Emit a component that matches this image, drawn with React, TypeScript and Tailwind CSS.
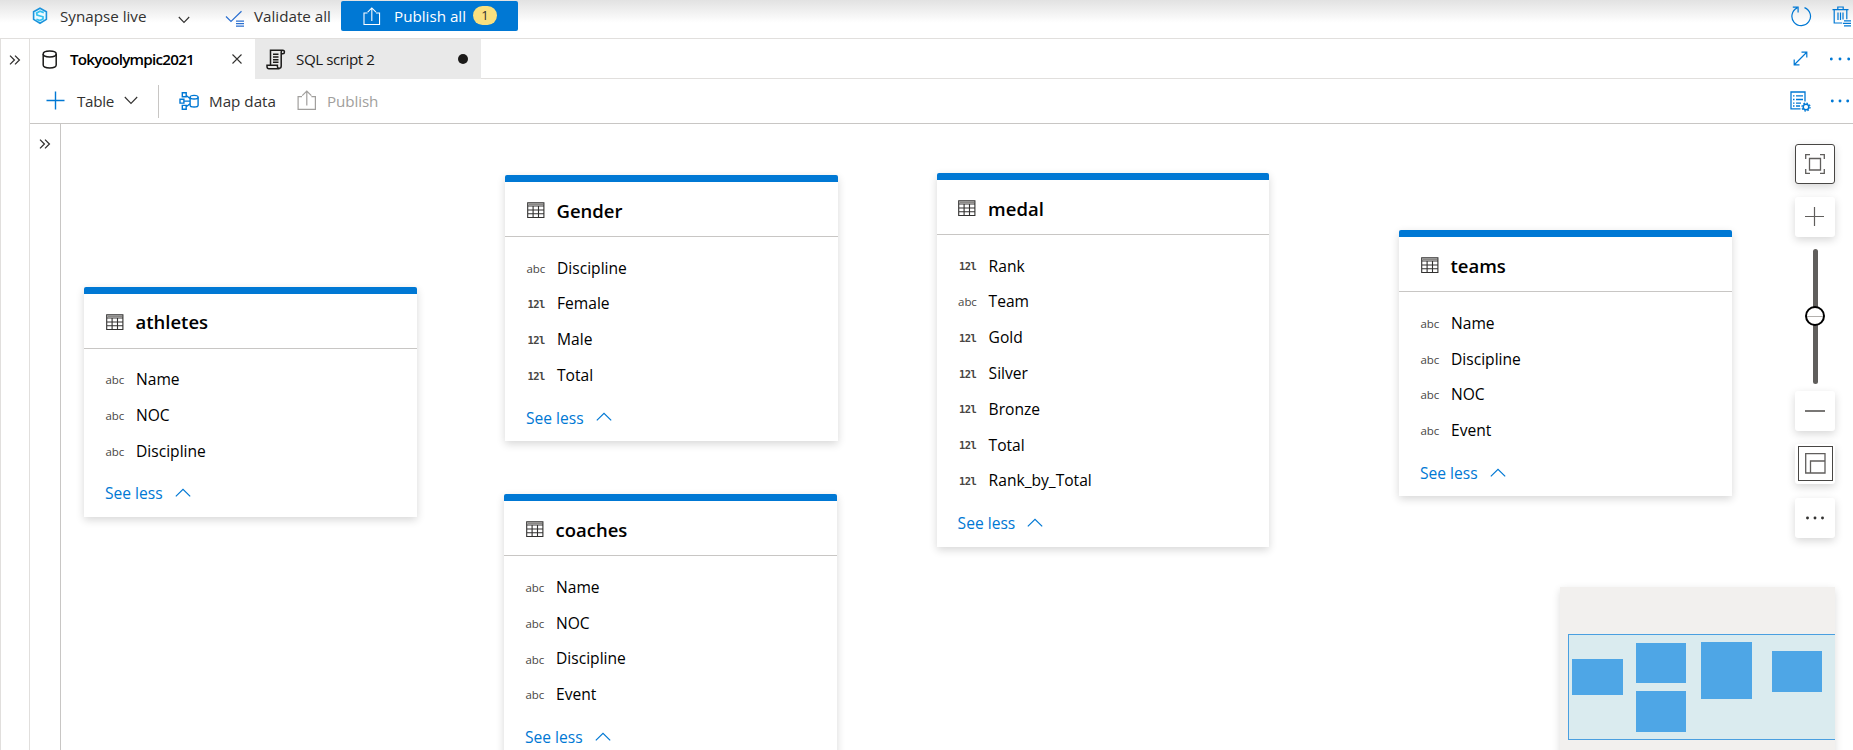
import type { ReactNode } from "react";

type FieldType = "abc" | "12l";
type Field = [FieldType, string];
type TableNode = { name: string; x: number; y: number; fields: Field[] };

const TABLES: TableNode[] = [
  { name: "athletes", x: 23, y: 162.5, fields: [["abc", "Name"], ["abc", "NOC"], ["abc", "Discipline"]] },
  { name: "Gender", x: 444, y: 51, fields: [["abc", "Discipline"], ["12l", "Female"], ["12l", "Male"], ["12l", "Total"]] },
  { name: "coaches", x: 443, y: 370.3, fields: [["abc", "Name"], ["abc", "NOC"], ["abc", "Discipline"], ["abc", "Event"]] },
  {
    name: "medal",
    x: 875.6,
    y: 49,
    fields: [["12l", "Rank"], ["abc", "Team"], ["12l", "Gold"], ["12l", "Silver"], ["12l", "Bronze"], ["12l", "Total"], ["12l", "Rank_by_Total"]],
  },
  { name: "teams", x: 1338, y: 106.2, fields: [["abc", "Name"], ["abc", "Discipline"], ["abc", "NOC"], ["abc", "Event"]] },
];

const MINI = [
  { x: 3.5, y: 25, w: 50.5, h: 35.5 },
  { x: 67.3, y: 8.5, w: 50.5, h: 40.5 },
  { x: 67.3, y: 57, w: 50.5, h: 40.5 },
  { x: 132.5, y: 8, w: 50.5, h: 57 },
  { x: 203.3, y: 17, w: 50.5, h: 40.5 },
];

function Svg({ w, h, className = "", sw = 1.2, children }: { w: number; h: number; className?: string; sw?: number; children: ReactNode }) {
  return (
    <svg width={w} height={h} viewBox={`0 0 ${w} ${h}`} fill="none" stroke="currentColor" strokeWidth={sw} className={`shrink-0 ${className}`}>
      {children}
    </svg>
  );
}

function DoubleChevron({ className = "" }: { className?: string }) {
  return (
    <Svg w={12} h={10} sw={1.3} className={className}>
      <path d="M1 .6 5.4 5 1 9.4M6 .6 10.4 5 6 9.4" />
    </Svg>
  );
}

function ShareUp({ className = "" }: { className?: string }) {
  return (
    <Svg w={20} h={21} className={className}>
      <path d="M5 6.6H1.1v12.8h17.3V6.6h-4M9.8 15.5V1.2M5.2 5.6l4.6-4.6 4.6 4.6" />
    </Svg>
  );
}

function Dots({ gap, className = "" }: { gap: number; className?: string }) {
  return (
    <Svg w={20} h={4} className={className}>
      <g fill="currentColor" stroke="none">
        <circle cx={10 - gap} cy="2" r="1.45" />
        <circle cx="10" cy="2" r="1.45" />
        <circle cx={10 + gap} cy="2" r="1.45" />
      </g>
    </Svg>
  );
}

function TableIcon() {
  return (
    <Svg w={18} h={17} className="text-[#323130]">
      <path d="M1.5 2.2h15" stroke="#8a8886" strokeWidth="1.6" />
      <path d="M.7.7h16.2v14.8H.7zM.7 4h16.2M.7 8h16.2M.7 11.8h16.2M6.1 4v11.5M11.5 4v11.5" strokeWidth="1.1" />
    </Svg>
  );
}

function TypeTag({ type }: { type: FieldType }) {
  return type === "abc" ? (
    <span className="w-[31px] text-[11.5px] font-medium tracking-[-0.1px] text-[#484644]">abc</span>
  ) : (
    <span className="w-[31px] pl-px font-['DejaVu_Sans_Mono',monospace] text-[10.5px] font-bold tracking-[-0.6px] text-[#484644]">12l</span>
  );
}

function TableCard({ table }: { table: TableNode }) {
  return (
    <section
      className="absolute w-[332.5px] rounded-t-[2px] border-t-[7.5px] border-[#0078d4] bg-white shadow-[0_3px_9px_rgba(0,0,0,0.16)]"
      style={{ left: table.x, top: table.y }}
    >
      <header className="flex h-[55px] items-center border-b border-[#c8c6c4] pt-[3px] pl-[21.5px]">
        <TableIcon />
        <h2 className="pt-px pl-[12px] text-[18.5px] leading-none font-semibold text-black">{table.name}</h2>
      </header>
      <ul className="pt-[13.5px]">
        {table.fields.map(([type, name]) => (
          <li key={name} className="flex h-[35.8px] items-center pl-[21.5px] text-[15.6px] leading-none text-black">
            <TypeTag type={type} />
            <span className="-ml-[0.5px]">{name}</span>
          </li>
        ))}
      </ul>
      <button className="flex h-[47.5px] items-center pt-[2px] pl-[21px] text-[15.6px] leading-none text-[#0078d4]">
        See less
        <Svg w={16} h={10} className="mb-[2px] ml-[12px]">
          <path d="M.8 8.4 8 1.3l7.2 7.1" />
        </Svg>
      </button>
    </section>
  );
}

function TopBar() {
  return (
    <div className="flex h-[39px] shrink-0 items-start border-b border-[#e1dfdd] bg-linear-to-b from-[#e2e2e2] to-white to-60% text-[#323130]">
      <div className="flex h-[32px] w-full items-center">
        <Svg w={16} h={18} className="ml-[32px]">
          <path d="m8 1.2 6.4 3.6v7.6L8 16.2l-6.4-3.8V4.8z" stroke="#1b93dc" strokeWidth="1.6" fill="#eafaff" />
          <path d="M11.8 5.6 8 4.2 4.6 6 5 8l6 1.800v2.200l-3.200 1.600-3.400-1.400" stroke="#35c1f1" strokeWidth="1.700" />
        </Svg>
        <span className="ml-[12px] w-[118px] pt-[2px]">Synapse live</span>
        <Svg w={12} h={8} className="mt-[8px]" sw={1.1}>
          <path d="M.8 1 6 6.5 11.2 1" />
        </Svg>
        <Svg w={20} h={18} className="mt-[5px] ml-[35px] text-[#2b6fd0]">
          <path d="m1 6.500 5 5L16.500 1.200M11 11.200h8M11 13.700h8M11 16.200h8" />
        </Svg>
        <span className="ml-[9px] w-[87px] pt-[2px]">Validate all</span>
        <button className="mt-px flex h-[30px] w-[177px] items-center self-start rounded-[2px] bg-[#0078d4] pl-[22px] text-white">
          <ShareUp className="h-[19px] w-[18px]" />
          <span className="ml-[13px] w-[79px] pt-[2px] text-left">Publish all</span>
          <span className="mb-px flex h-[19px] w-[24px] items-center justify-center rounded-full bg-[#f9e07f] text-[13px] text-[#323130]">1</span>
        </button>
        <div className="ml-auto flex items-center pr-[2px] text-[#0078d4]">
          <Svg w={21} h={21}>
            <path d="M13.5 1.600a9.300 9.300 0 1 1-7.300.3M1.800 1.200h5.300v5.200" />
          </Svg>
          <Svg w={19} h={21} className="ml-[20px]">
            <path d="M.5 3.700h16M5.800 3.500V1h5.400v2.500M2.200 3.700V17h8M14.800 3.700v9.500M6 6.500v7.500M8.500 6.500v7.500M11 6.500v7M12 14.800h7M11 17.300h8M12 19.800h7" />
          </Svg>
        </div>
      </div>
    </div>
  );
}

function Tabs() {
  return (
    <div className="flex h-[40px] shrink-0 items-stretch border-b border-[#e1dfdd]">
      <div className="-mb-px flex w-[225px] items-center bg-white pl-[12px]">
        <Svg w={16} h={19} sw={1.5} className="text-[#1b1a19]">
          <path d="M1.200 4v11c0 1.700 2.800 2.900 6.500 2.900s6.500-1.200 6.500-2.900V4" />
          <ellipse cx="7.700" cy="4" rx="6.500" ry="2.900" />
        </Svg>
        <span className="ml-[12px] w-[162px] pt-[2px] text-[15.200px] font-semibold tracking-[-0.75px] text-black">Tokyoolympic2021</span>
        <Svg w={10} h={10} sw={1.1} className="text-[#323130]">
          <path d="m.5.5 9 9M9.500.5l-9 9" />
        </Svg>
      </div>
      <div className="-mb-px flex w-[226px] items-center bg-[#e9e9e9] pl-[11px]">
        <Svg w={20} h={21} sw={1.5} className="text-[#1b1a19]">
          <path d="M4.500 15.500V1.200h12.300c2.200 0 2.200 3.600 0 3.600h-1.600M15.200 5V17c0 3-3.800 3-3.800.5v-1.300H1v1.300c0 1.300.8 2.300 2 2.300h10.500M15.200 5V3c0-1 .6-1.800 1.600-1.800" />
          <path d="M7 5.200h5.500M7 8h5.500M7 10.700h5.500M7 13.300h5.500" />
        </Svg>
        <span className="ml-[10px] w-[162px] pt-[2px] tracking-[-0.45px] text-[#1b1a19]">SQL script 2</span>
        <i className="h-[10px] w-[10px] rounded-full bg-[#1b1a19]" />
      </div>
      <div className="ml-auto flex items-center pr-[3px] text-[#0078d4]">
        <Svg w={15} h={15} className="mr-px">
          <path d="M1.500 13.500l12-12M8.500 1.200h5.300v5.300M1.200 8.500v5.300h5.300" />
        </Svg>
        <Dots gap={8.7} className="ml-[21px]" />
      </div>
    </div>
  );
}

function Toolbar() {
  return (
    <div className="flex h-[45px] shrink-0 items-center border-b border-[#c8c6c4] text-[#323130]">
      <Svg w={19} h={19} sw={1.4} className="mb-px ml-[16px] text-[#0078d4]">
        <path d="M9.500.5v18M.5 9.500h18" />
      </Svg>
      <span className="ml-[12px] w-[47px] pt-[2px] tracking-[-0.3px]">Table</span>
      <Svg w={14} h={9} sw={1.1} className="mb-px">
        <path d="M.8 1 7 7.500 13.200 1" />
      </Svg>
      <i className="ml-[20px] h-[33px] w-px bg-[#c8c6c4]" />
      <Svg w={20} h={18} sw={1.4} className="ml-[20px] text-[#0078d4]">
        <path d="M3.300.8h3.900v3.900H3.300zM1 7.200h3.900v3.900H1zM3.300 13.400h3.900v3.900H3.300zM7.200 3.500l3.800 3M4.900 9.100H11M7.200 14.800l3.800-3" />
        <ellipse cx="15.100" cy="5.200" rx="4" ry="1.800" />
        <path d="M11.100 5.200v8c0 2.400 8 2.400 8 0v-8" />
      </Svg>
      <span className="ml-[10px] w-[88px] pt-[2px]">Map data</span>
      <ShareUp className="mb-px text-[#a19f9d]" />
      <span className="ml-[10px] pt-[2px] tracking-[-0.1px] text-[#a19f9d]">Publish</span>
      <div className="ml-auto flex items-center pr-[3px] text-[#0078d4]">
        <Svg w={21} h={21} sw={1.3} className="mr-px">
          <path d="M10.500 17.800H1V1h14v9.500M3 4.800h1.500M6 4.800h7M3 8.500h1.500M6 8.500h7M3 12.200h1.500M6 12.200h5M3 15h1.500M6 15h4" />
          <circle cx="16" cy="16" r="2.800" strokeWidth="1.500" />
          <circle cx="16" cy="16" r="4" strokeWidth="1.300" strokeDasharray="1.570 1.570" />
        </Svg>
        <Dots gap={7.7} className="ml-[18px]" />
      </div>
    </div>
  );
}

const TOOL = "flex h-[40px] w-[40px] shrink-0 items-center justify-center rounded-[3px] bg-white shadow-[0_3px_8px_rgba(0,0,0,0.16)]";

function ZoomControls() {
  return (
    <div className="absolute top-[20px] right-[18px] flex w-[40px] flex-col items-center text-[#605e5c]">
      <button className={`${TOOL} border border-[#484644]`}>
        <Svg w={20} h={20} sw={1.3}>
          <path d="M.7 5V.7H5M15 .7h4.300V5M19.300 15v4.300H15M5 19.300H.7V15M4.500 4.500h11v11.500h-11z" />
        </Svg>
      </button>
      <button className={`${TOOL} mt-[13px] pr-px pb-px`}>
        <Svg w={19} h={19} sw={1.2}>
          <path d="M9.500 0v19M0 9.500h19" />
        </Svg>
      </button>
      <div className="mt-[12px] flex h-[135px] w-[5px] items-center justify-center rounded-full bg-[#605e5c] pb-px">
        <div className="flex h-[20px] w-[20px] shrink-0 items-center rounded-full border-2 border-black bg-white">
          <i className="h-px w-full bg-[#b3b0ad]" />
        </div>
      </div>
      <button className={`${TOOL} mt-[7px]`}>
        <i className="h-[2px] w-[20px] bg-[#797775]" />
      </button>
      <button className={`${TOOL} mt-[13px] pb-px`}>
        <span className="flex h-[35px] w-[35px] items-center justify-center border border-[#484644]">
          <Svg w={21} h={21} sw={1.3}>
            <path d="M.7.700h19.300V20H.7zM5.500 20V8H20" />
          </Svg>
        </span>
      </button>
      <button className={`${TOOL} mt-[14px] text-[#323130]`}>
        <Dots gap={7.5} />
      </button>
    </div>
  );
}

function MiniMap() {
  return (
    <div className="absolute top-[463px] right-[18px] h-[180px] w-[275px] overflow-clip bg-[#f2f0ee] pt-[47px] pl-[8px] shadow-[0_3px_8px_rgba(0,0,0,0.14)]">
      <div className="relative h-[106px] w-[300px] border border-[#4a9fe0] bg-[#daebef]">
        {MINI.map((m, i) => (
          <i key={i} className="absolute bg-[#4ea6e6]" style={{ left: m.x - 0.5, top: m.y - 1, width: m.w, height: m.h }} />
        ))}
      </div>
    </div>
  );
}

export default function App() {
  return (
    <div className="flex h-[750px] w-full flex-col overflow-hidden bg-white font-['Open_Sans','Noto_Sans',sans-serif] text-[15.2px] leading-none whitespace-nowrap">
      <TopBar />
      <div className="flex min-h-0 flex-1">
        <aside className="flex w-[30px] shrink-0 justify-center border-x border-[#e1dfdd] pt-[15.5px]">
          <DoubleChevron className="text-[#323130]" />
        </aside>
        <main className="flex min-w-0 flex-1 flex-col">
          <Tabs />
          <Toolbar />
          <div className="flex min-h-0 flex-1">
            <aside className="flex w-[31px] shrink-0 justify-center border-r border-[#c8c6c4] pt-[15px]">
              <DoubleChevron className="text-[#323130]" />
            </aside>
            <div className="relative min-w-0 flex-1 overflow-hidden">
              {TABLES.map((t) => (
                <TableCard key={t.name} table={t} />
              ))}
              <ZoomControls />
              <MiniMap />
            </div>
          </div>
        </main>
      </div>
    </div>
  );
}
